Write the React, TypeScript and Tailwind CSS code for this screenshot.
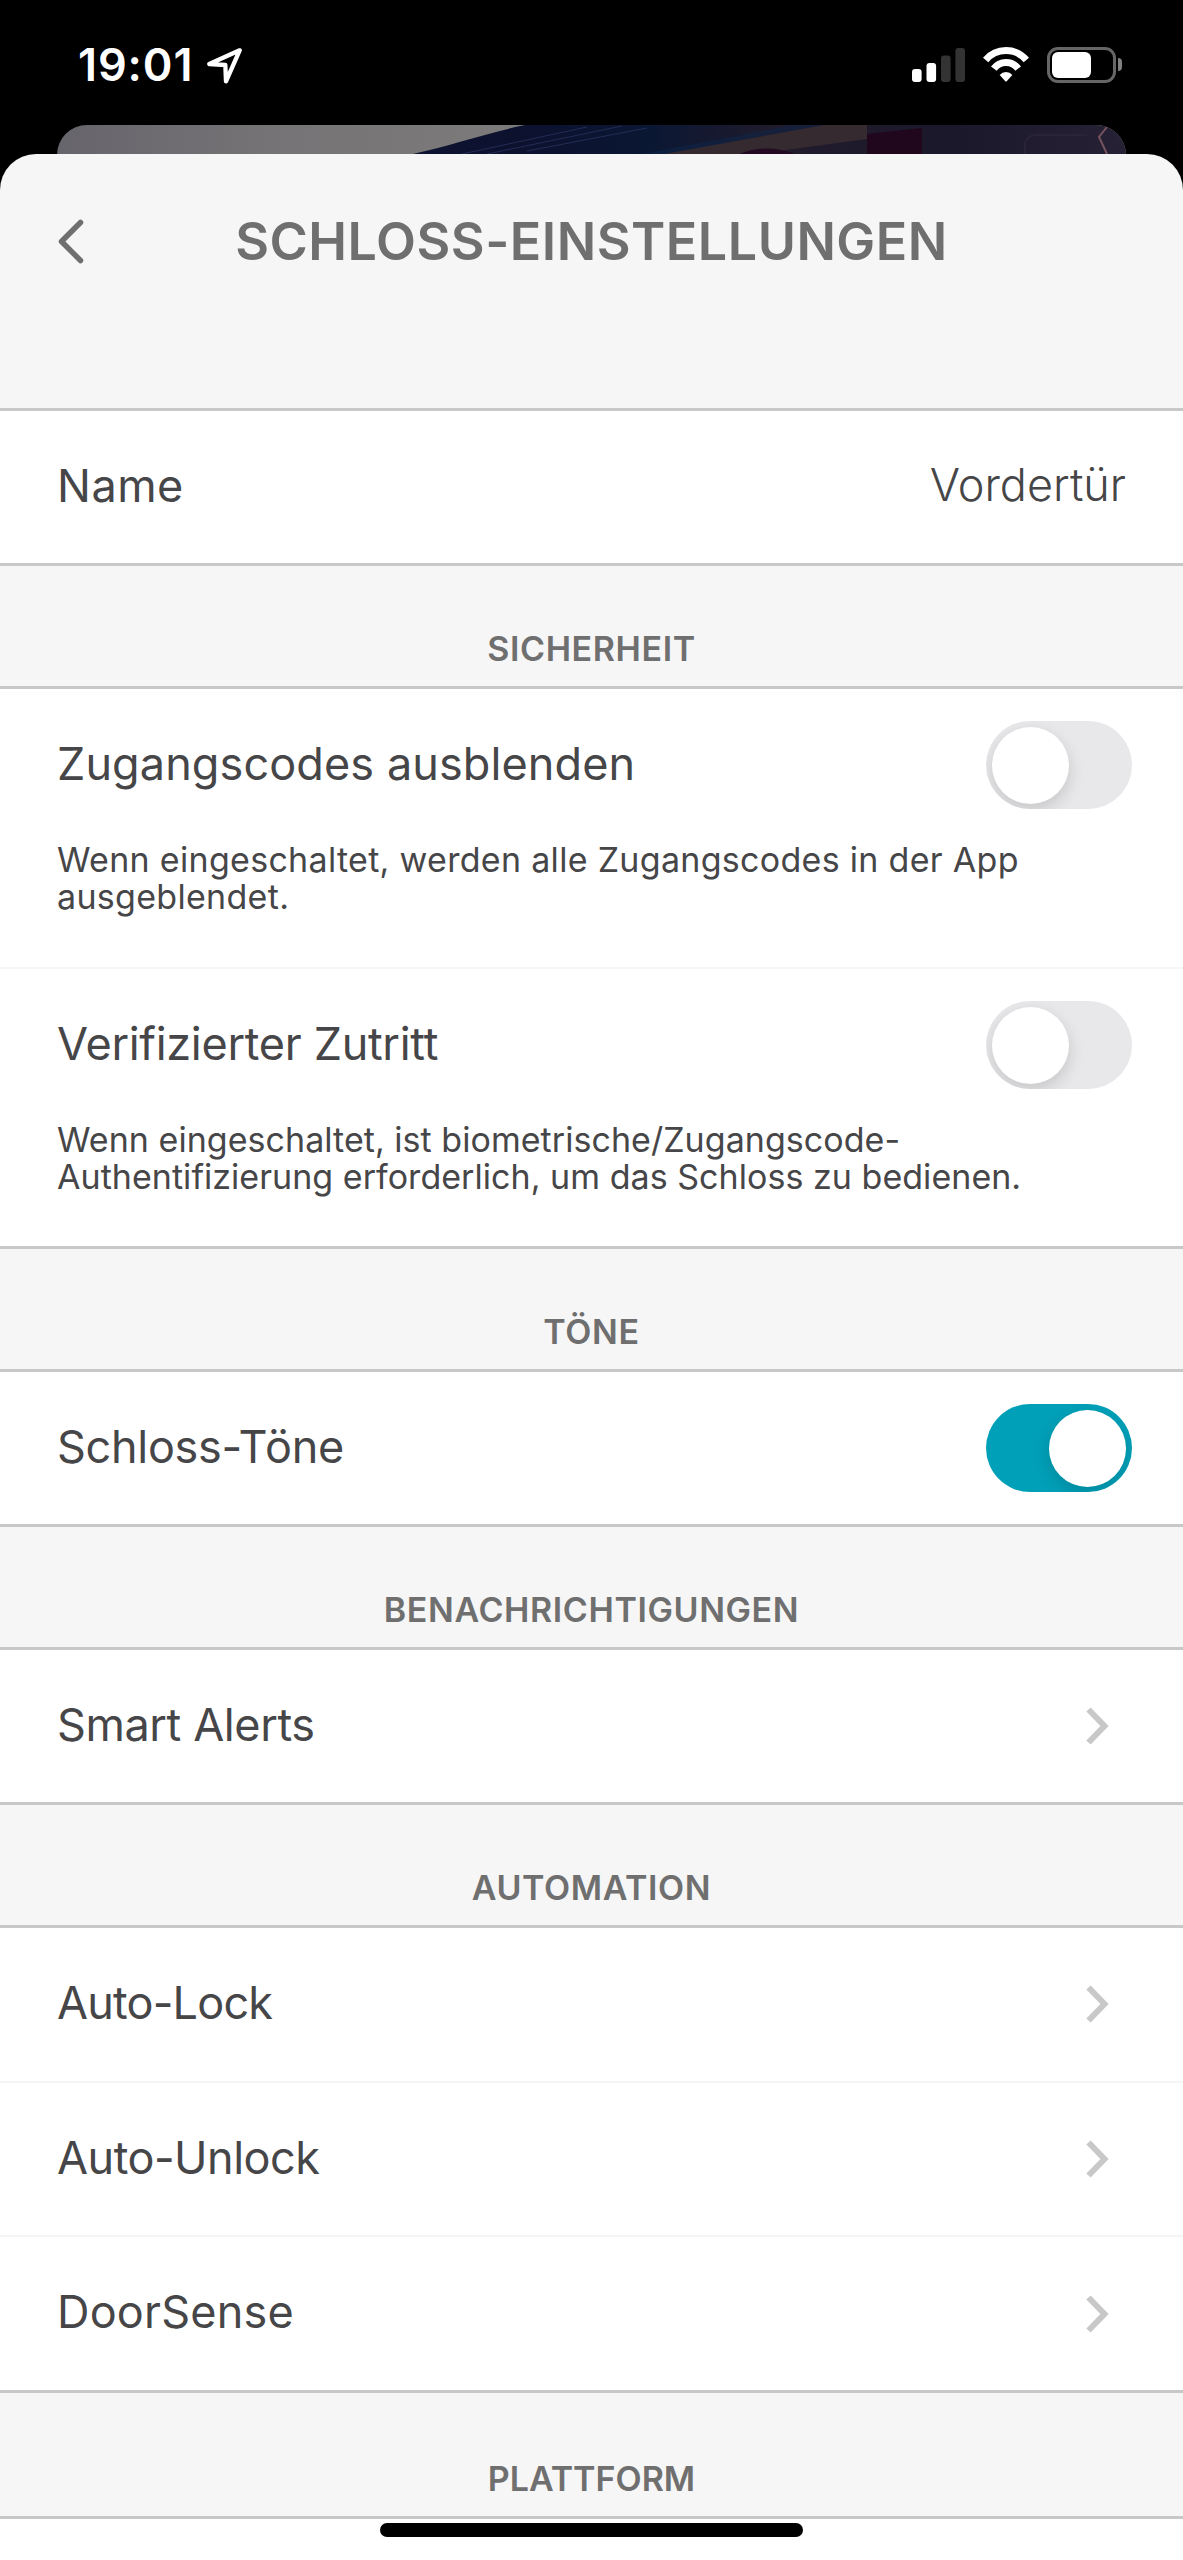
import React from 'react';
import clsx from 'clsx';

const StatusBar: React.FC = () => (
  <div className="h-[125px] pt-[42px] bg-black">
    <div className="flex items-center h-[45px] pl-[78px] pr-[61px] text-white">
      <span className="text-[45px] leading-none font-semibold tracking-[0.9px]">19:01</span>
      <svg className="w-[36px] h-[36px] ml-[14px] mt-[2px]" viewBox="35 37 108 108" fill="none">
        <path
          d="M133 44 L42 85 L90 88 L92 137 Z"
          stroke="currentColor"
          strokeWidth="13"
          strokeLinejoin="round"
        />
      </svg>

      <div className="flex items-center ml-auto">
        {/* Signal strength */}
        <svg className="w-[53px] h-[34px]" viewBox="0 0 53 34">
          <rect x="0" y="21" width="9.6" height="13" rx="3" fill="#fff" />
          <rect x="14.5" y="15" width="9.6" height="19" rx="3" fill="#fff" />
          <rect x="29" y="7.5" width="9.6" height="26.5" rx="3" fill="#333" />
          <rect x="43.4" y="0" width="9.6" height="34" rx="3" fill="#333" />
        </svg>

        {/* Wi-Fi */}
        <svg className="w-[46px] h-[35px] ml-[18px]" viewBox="247 34 138 105" fill="none">
          <path d="M255 73 A80 80 0 0 1 377 73" stroke="#fff" strokeWidth="21" />
          <path d="M279.500 99 A45 45 0 0 1 352.500 99" stroke="#fff" strokeWidth="21" />
          <path d="M297 118 A25 25 0 0 1 335 118 L318 137 Q316 139 314 137 Z" fill="#fff" />
        </svg>

        {/* Battery */}
        <div className="flex items-center ml-[18px]">
          <div className="w-[69px] h-[36px] p-[2px] border-[3px] border-[#666] rounded-[11px]">
            <div className="w-[39px] h-full bg-white rounded-[6px]" />
          </div>
          <div className="w-[4px] h-[13px] ml-[2px] bg-[#808080] rounded-r-full" />
        </div>
      </div>
    </div>
  </div>
);

// Top edge of the lock photo that stays visible behind the sheet
const PhotoStrip: React.FC = () => (
  <div className="h-[29px] bg-black pl-[57px] pr-[57px]">
    <svg className="block w-full h-[66px] rounded-t-[30px]" viewBox="0 0 1069 66" preserveAspectRatio="none">
      <defs>
        <linearGradient id="wall" x1="0" x2="1">
          <stop offset="0" stopColor="#67656c" />
          <stop offset="0.2" stopColor="#757375" />
          <stop offset="0.45" stopColor="#7d7b7a" />
        </linearGradient>
        <linearGradient id="door" x1="0" x2="1">
          <stop offset="0" stopColor="#10153a" />
          <stop offset="0.3" stopColor="#0c112e" />
          <stop offset="0.45" stopColor="#0a1733" />
          <stop offset="0.6" stopColor="#211b2c" />
          <stop offset="0.8" stopColor="#1b182b" />
          <stop offset="1" stopColor="#272135" />
        </linearGradient>
      </defs>
      <rect width="1069" height="66" fill="url(#wall)" />
      <path d="M356 29 C395 20 430 8 468 0 H1069 V66 H200 Z" fill="url(#door)" />
      <g fill="none" stroke="#232c55" strokeWidth="1">
        <path d="M405 29 L530 2" />
        <path d="M430 29 L565 1" />
        <path d="M470 26 L590 3" />
      </g>
      <path d="M585 29 L735 0 H775 L690 29 Z" fill="#0d2549" opacity="0.5" />
      <path d="M607 29 L767 0 H810 V14 L700 29 Z" fill="#352a30" />
      <path d="M682 29 Q710 18 738 29 Z" fill="#230a22" />
      <path d="M810 9 L865 3 V29 H810 Z" fill="#20071e" />
      <path d="M968 29 V18 Q970 11 978 10 H1030" fill="none" stroke="#292438" strokeWidth="2" />
      <path d="M1050 2 L1042 12 L1050 29" fill="none" stroke="#75545f" strokeWidth="2" />
    </svg>
  </div>
);

const Toggle: React.FC<{ on?: boolean }> = ({ on }) => (
  <div
    className={clsx(
      'flex items-center w-[146px] h-[88px] px-[6px] rounded-full overflow-hidden shrink-0',
      on ? 'bg-[#00a0b8] justify-end' : 'bg-[#e8e8ea] justify-start',
    )}
  >
    <div className="w-[77px] h-[77px] rounded-full bg-white shadow-[0_6px_16px_rgba(0,0,0,0.15)]" />
  </div>
);

const Chevron: React.FC = () => (
  <svg className="w-[23px] h-[38px] mr-[23px]" viewBox="0 0 23 38" fill="none">
    <path d="M2.500 2.500 L18.500 19 L2.500 35.500" stroke="#c8c8c8" strokeWidth="6" />
  </svg>
);

const SectionHeader: React.FC<{ title: string; className?: string }> = ({ title, className }) => (
  <h2
    className={clsx(
      'flex items-end justify-center pb-5 text-[34px] leading-[34px] font-semibold text-[#6f6f6f]',
      className ?? 'h-[120px] tracking-[0.6px]',
    )}
  >
    {title}
  </h2>
);

const Group: React.FC<{ children?: React.ReactNode; className?: string }> = ({ children, className }) => (
  <div className={clsx('flex flex-col bg-white border-y-[3px] border-[#c8c8c8]', className)}>{children}</div>
);

const Row: React.FC<{ label: string; tracking?: string; children: React.ReactNode; divider?: boolean }> = ({
  label,
  tracking,
  children,
  divider,
}) => (
  <div
    className={clsx(
      'flex flex-1 items-center justify-between pl-[57px] pr-[51px]',
      divider && 'border-b-2 border-[#f5f5f5]',
    )}
  >
    <span className={clsx('pb-1 text-[45px] leading-none', tracking)}>{label}</span>
    {children}
  </div>
);

const securityItems = [
  {
    label: 'Zugangscodes ausblenden',
    description: 'Wenn eingeschaltet, werden alle Zugangscodes in der App ausgeblendet.',
    style: 'h-[280px] border-b-2 border-[#f5f5f5]',
    tracking: 'tracking-[0.1px]',
    descriptionTracking: 'tracking-[0.3px]',
  },
  {
    label: 'Verifizierter Zutritt',
    description:
      'Wenn eingeschaltet, ist biometrische/Zugangscode-Authentifizierung erforderlich, um das Schloss zu bedienen.',
    style: 'h-[277px]',
    tracking: 'tracking-[-0.3px]',
    descriptionTracking: 'tracking-[0.04px]',
  },
];

const automationItems = [
  { label: 'Auto-Lock', tracking: 'tracking-[-0.8px]' },
  { label: 'Auto-Unlock', tracking: 'tracking-[-0.5px]' },
  { label: 'DoorSense', tracking: 'tracking-[0.2px]' },
];

export default function App() {
  return (
    <div
      className="relative w-[1183px] h-[2560px] overflow-hidden bg-black text-[#464648]"
      style={{ fontFamily: 'Inter, "Liberation Sans", sans-serif' }}
    >
      <StatusBar />
      <PhotoStrip />

      <div className="relative h-[2406px] bg-[#f6f6f6] rounded-t-[36px] overflow-hidden">
        <header className="relative flex justify-center h-[254px] pt-[62px]">
          <svg className="absolute left-[57px] top-[65px] w-[28px] h-[45px]" viewBox="0 0 28 45" fill="none">
            <path
              d="M23.500 3.500 L4.500 22.500 L23.500 41.500"
              stroke="#6f6f6f"
              strokeWidth="5.500"
              strokeLinecap="round"
              strokeLinejoin="round"
            />
          </svg>
          <h1 className="text-[52px] leading-[52px] font-semibold tracking-[0.5px] text-[#6f6f6f]">
            SCHLOSS-EINSTELLUNGEN
          </h1>
        </header>

        <Group className="h-[158px]">
          <Row label="Name" tracking="tracking-[0.5px]">
            <span className="pb-[5px] pr-[6px] text-[45px] leading-none font-light">Vordertür</span>
          </Row>
        </Group>

        <SectionHeader title="SICHERHEIT" />
        <Group>
          {securityItems.map((item) => (
            <div key={item.label} className={clsx('pt-8 pl-[57px] pr-[51px]', item.style)}>
              <div className="flex items-center justify-between">
                <span className={clsx('pb-1 text-[45px] leading-none', item.tracking)}>{item.label}</span>
                <Toggle />
              </div>
              <p className={clsx('mt-8 text-[34px] leading-[37px]', item.descriptionTracking)}>
                {item.description}
              </p>
            </div>
          ))}
        </Group>

        <SectionHeader title="TÖNE" />
        <Group className="h-[158px]">
          <Row label="Schloss-Töne" tracking="tracking-[-0.3px]">
            <Toggle on />
          </Row>
        </Group>

        <SectionHeader title="BENACHRICHTIGUNGEN" />
        <Group className="h-[158px]">
          <Row label="Smart Alerts" tracking="tracking-[-0.4px]">
            <Chevron />
          </Row>
        </Group>

        <SectionHeader title="AUTOMATION" />
        <Group className="h-[468px]">
          {automationItems.map((item, index) => (
            <Row
              key={item.label}
              label={item.label}
              tracking={item.tracking}
              divider={index < automationItems.length - 1}
            >
              <Chevron />
            </Row>
          ))}
        </Group>

        <SectionHeader title="PLATTFORM" className="h-[123px]" />
        <Group className="h-[80px]" />
      </div>

      {/* Home indicator */}
      <div className="absolute left-[380px] bottom-[23px] w-[423px] h-[14px] rounded-full bg-black" />
    </div>
  );
}
